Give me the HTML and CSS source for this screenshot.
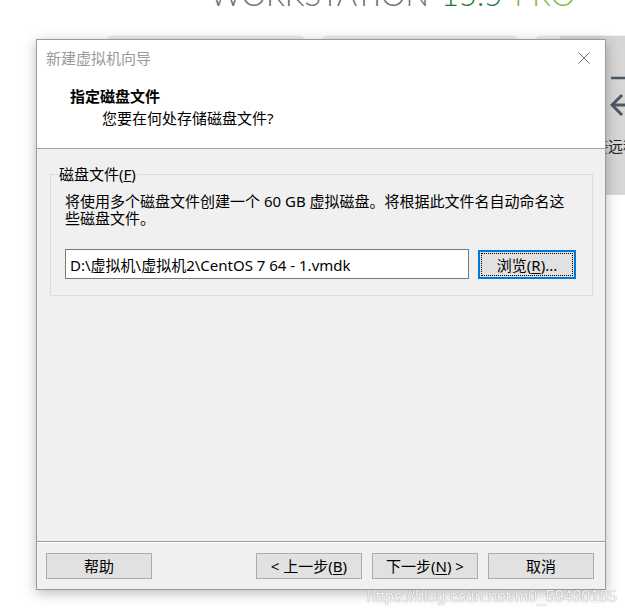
FILE: index.html
```html
<!DOCTYPE html>
<html lang="zh-CN">
<head>
<meta charset="utf-8">
<title>新建虚拟机向导</title>
<link rel="stylesheet" href="styles.css">
</head>
<body>
<div class="desk">
  <div class="app-logo"><span class="ws">WORKSTATION</span><span class="ver">15.5</span><span class="pro">PRO</span></div>
  <div class="tabs">
    <div class="tab tab1"></div>
    <div class="tab tab2"></div>
    <div class="tab tab3"></div>
  </div>
  <div class="side-panel">
    <svg class="remote-icon" width="40" height="45" viewBox="0 0 40 45">
      <line x1="1" y1="4" x2="40" y2="4" stroke="#4b5864" stroke-width="2.5"/>
      <line x1="2" y1="31" x2="40" y2="31" stroke="#4b5864" stroke-width="3"/>
      <polyline points="12,21 2,31 12,41" fill="none" stroke="#4b5864" stroke-width="3" stroke-linejoin="miter"/>
    </svg>
    <div class="side-text">连接远程服务器</div>
  </div>

  <div class="dialog">
    <div class="titlebar">
      <span class="title">新建虚拟机向导</span>
      <svg class="close" width="12" height="12" viewBox="0 0 12 12">
        <line x1="0.5" y1="0.5" x2="11.5" y2="11.5" stroke="#6f6f6f" stroke-width="1"/>
        <line x1="11.5" y1="0.5" x2="0.5" y2="11.5" stroke="#6f6f6f" stroke-width="1"/>
      </svg>
    </div>
    <div class="header">
      <div class="heading">指定磁盘文件</div>
      <div class="subheading">您要在何处存储磁盘文件?</div>
    </div>
    <div class="body">
      <fieldset class="group">
        <legend class="group-label">磁盘文件(<u>F</u>)</legend>
        <div class="group-body">
          <p class="desc">将使用多个磁盘文件创建一个 60 GB 虚拟磁盘。将根据此文件名自动命名这<br>些磁盘文件。</p>
          <div class="path-row">
            <input class="path-input" type="text" readonly value="D:\虚拟机\虚拟机2\CentOS 7 64 - 1.vmdk">
            <button class="btn browse" type="button">浏览(<u>R</u>)...</button>
          </div>
        </div>
      </fieldset>
    </div>
    <div class="footer">
      <button class="btn" type="button">帮助</button>
      <div class="spacer"></div>
      <div class="nav">
        <button class="btn" type="button">&lt; 上一步(<u>B</u>)</button>
        <button class="btn" type="button">下一步(<u>N</u>) &gt;</button>
        <button class="btn" type="button">取消</button>
      </div>
    </div>
  </div>

  <div class="watermark">https://blog.csdn.net/m0_59430185</div>
</div>
</body>
</html>
```

FILE: styles.css
```css
html, body {
  margin: 0;
  padding: 0;
  width: 625px;
  height: 616px;
  overflow: hidden;
  background: #ffffff;
}

.desk {
  position: relative;
  width: 625px;
  height: 616px;
  overflow: hidden;
  font-family: "Noto Sans", "Noto Sans CJK SC", sans-serif;
  font-size: 15px;
  color: #000;
}

/* background application */
.app-logo {
  position: absolute;
  left: 210px;
  top: -22px;
  display: flex;
  gap: 12px;
  font-family: Lato, "Noto Sans", sans-serif;
  font-weight: 300;
  font-size: 31px;
  line-height: 32px;
  color: #6d6e71;
  white-space: nowrap;
}
.app-logo .ver { color: #1d7a3a; }
.app-logo .pro { color: #78be43; }

.tabs {
  position: absolute;
  left: 107px;
  top: 35px;
  display: flex;
  gap: 17px;
}
.tab {
  height: 12px;
  border-radius: 6px 6px 0 0;
  background: linear-gradient(#f2f2f2, #d4d4d4);
}
.tab1 { width: 198px; }
.tab2 { width: 196px; }
.tab3 { width: 120px; }

.side-panel {
  position: absolute;
  left: 560px;
  top: 36px;
  width: 120px;
  height: 159px;
  background: #d6d6d6;
  display: flex;
  flex-direction: column;
  align-items: flex-start;
}
.remote-icon {
  display: block;
  margin-top: 38px;
  margin-left: 50px;
}
.side-text {
  margin-top: 19px;
  margin-left: 18px;
  line-height: 17px;
  white-space: nowrap;
  color: #222;
}

/* dialog window */
.dialog {
  position: absolute;
  left: 36px;
  top: 39px;
  width: 568px;
  height: 549px;
  border: 1px solid #9b9b9b;
  background: #f0f0f0;
  box-shadow: 0 3px 12px rgba(0, 0, 0, 0.28);
  display: flex;
  flex-direction: column;
}

.titlebar {
  height: 36px;
  flex: none;
  background: #fff;
  display: flex;
  align-items: center;
  justify-content: space-between;
  padding: 0 15px 0 9px;
}
.title {
  color: #9a9a9a;
  line-height: 20px;
}
.close { display: block; }

.header {
  height: 72px;
  flex: none;
  background: #fff;
  border-bottom: 1px solid #a0a0a0;
}
.heading {
  margin: 10px 0 0 33px;
  font-weight: bold;
  line-height: 20px;
}
.subheading {
  margin: 2px 0 0 65px;
  line-height: 20px;
}

.body {
  flex: 1;
  min-height: 0;
  padding: 17px 12px 0 13px;
}

.group {
  margin: 0;
  border: 1px solid #dcdcdc;
  padding: 0 12px 16px 7px;
  min-width: 0;
}
.group-label {
  padding: 0 1px;
  line-height: 17px;
}
.group-body {
  padding-left: 7px;
}
.desc {
  margin: 10px 0 0 0;
  line-height: 17px;
  white-space: nowrap;
}
.path-row {
  margin-top: 22px;
  display: flex;
  align-items: flex-end;
}
.path-input {
  width: 404px;
  height: 30px;
  box-sizing: border-box;
  margin: 0;
  border: 1px solid #7a7a7a;
  background: #fff;
  padding: 0 0 0 4px;
  font-family: "Noto Sans", "Noto Sans CJK SC", sans-serif;
  font-size: 15px;
  color: #000;
  outline: none;
}

.btn {
  width: 106px;
  height: 26px;
  box-sizing: border-box;
  margin: 0;
  padding: 0;
  border: 1px solid #adadad;
  background: #e1e1e1;
  font-family: "Noto Sans", "Noto Sans CJK SC", sans-serif;
  font-size: 15px;
  line-height: 20px;
  color: #000;
}
.btn u { text-underline-offset: 2px; }

.browse {
  width: 98px;
  height: 29px;
  margin-left: 9px;
  border: 2px solid #0078d7;
  outline: 1px dotted #000;
  outline-offset: -4px;
}

.footer {
  box-sizing: border-box;
  height: 48px;
  flex: none;
  border-top: 1px solid #a0a0a0;
  box-shadow: inset 0 1px 0 #ffffff;
  display: flex;
  align-items: flex-start;
  padding: 11px 11px 0 9px;
}
.spacer { flex: 1; }
.nav {
  display: flex;
  gap: 10px;
}

.watermark {
  position: absolute;
  left: 367px;
  top: 588px;
  font-family: "Liberation Sans", Arial, sans-serif;
  font-size: 16px;
  line-height: 18px;
  color: rgba(255, 255, 255, 0.95);
  text-shadow: 0 0 1px rgba(0, 0, 0, 0.35), 0 0 1px rgba(0, 0, 0, 0.2);
  white-space: nowrap;
}
```
